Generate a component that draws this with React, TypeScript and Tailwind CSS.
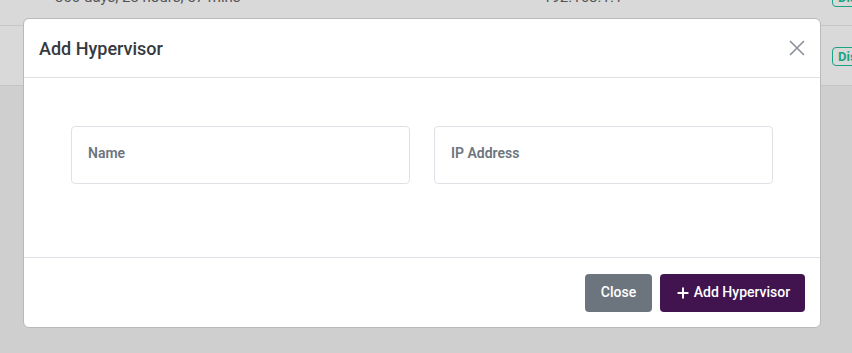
import React from 'react';
import { Plus } from 'lucide-react';

function StatusBadge({ className = '' }: { className?: string }) {
  return (
    <span className={`inline-flex h-[19px] shrink-0 items-center rounded-[4px] border border-[#1da383] px-[5px] text-[13px] font-bold text-[#1da383] ${className}`}>
      Disabled
    </span>
  );
}

function FloatingField({ label }: { label: string }) {
  return (
    <div className="flex h-[58px] flex-1 items-center rounded-[4px] border border-[#dee2e6] bg-white px-[16px] pb-[4px]">
      <span className="text-[14px] font-semibold text-[#6c757d]">{label}</span>
    </div>
  );
}

export default function App() {
  return (
    <div className="relative h-[353px] w-[852px] overflow-hidden bg-[#cfcfcf] font-['Roboto',sans-serif]">
      {/* table behind the backdrop */}
      <div className="flex h-[86px] flex-col border-b border-[#c4c4c4] bg-[#d9d9d9]">
        <div className="flex h-[26px] items-start overflow-hidden border-b border-[#c6c6c6]">
          <div className="-mt-[14px] flex w-full items-center text-[15px] text-[#555]">
            <span className="ml-[55px] w-[488px] shrink-0">300 days, 23 hours, 57 mins</span>
            <span className="w-[289px] shrink-0">192.168.1.1</span>
            <StatusBadge />
          </div>
        </div>
        <div className="flex flex-1 items-start pl-[832px] pt-[21px]">
          <StatusBadge />
        </div>
      </div>

      {/* modal */}
      <div className="absolute left-[23px] top-[18px] flex w-[798px] flex-col rounded-[6px] border border-[#b9b9b9] bg-white">
        <div className="flex h-[59px] items-center justify-between border-b border-[#dee2e6] pl-[15px] pr-[15px]">
          <h5 className="text-[18px] font-medium text-[#343a40]">Add Hypervisor</h5>
          <svg width="16" height="16" viewBox="0 0 16 16">
            <path d="M1 1L15 15M15 1L1 15" stroke="#8a9199" strokeWidth="1.6" fill="none" />
          </svg>
        </div>
        <div className="flex h-[179px] gap-[24px] px-[47px] pt-[48px]">
          <FloatingField label="Name" />
          <FloatingField label="IP Address" />
        </div>
        <div className="flex h-[70px] items-center justify-end gap-[8px] border-t border-[#dee2e6] pr-[15px]">
          <button className="h-[38px] w-[67px] rounded-[4px] bg-[#6c757d] text-[14px] font-medium text-white">
            Close
          </button>
          <button className="flex h-[38px] w-[145px] items-center justify-center gap-[3px] rounded-[4px] bg-[#41144f] text-[14px] font-medium text-white">
            <Plus className="h-[16px] w-[16px]" strokeWidth={3} />
            Add Hypervisor
          </button>
        </div>
      </div>
    </div>
  );
}
